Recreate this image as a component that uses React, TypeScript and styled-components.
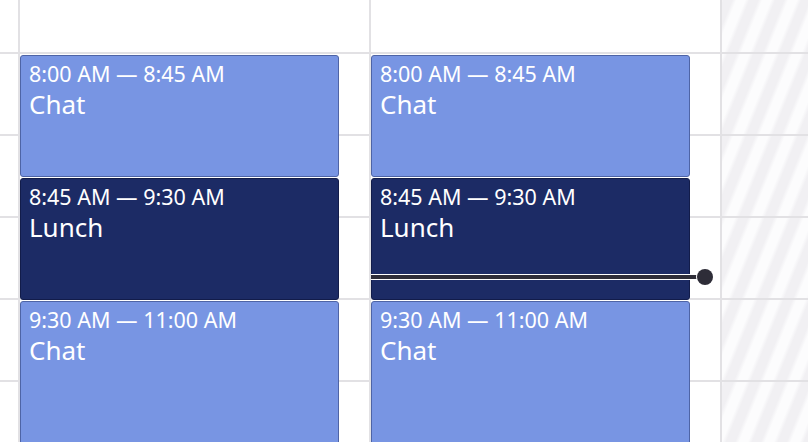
import React from 'react';
import styled, { createGlobalStyle } from 'styled-components';

const SLOT_HEIGHT = 82;
const SLOT_MINUTES = 30;
const DAY_START = 7 * 60 + 30; // first visible row starts at 7:30
const SLOT_COUNT = 7;

type CalendarEvent = {
  id: string;
  start: number;
  end: number;
  title: string;
  variant: 'light' | 'dark';
};

const toMinutes = (h: number, m: number) => h * 60 + m;

const formatTime = (minutes: number) => {
  const h = Math.floor(minutes / 60);
  const m = minutes % 60;
  const suffix = h >= 12 ? 'PM' : 'AM';
  const hour = h % 12 === 0 ? 12 : h % 12;
  return `${hour}:${m.toString().padStart(2, '0')} ${suffix}`;
};

const events: CalendarEvent[] = [
  { id: 'a', start: toMinutes(8, 0), end: toMinutes(8, 45), title: 'Chat', variant: 'light' },
  { id: 'b', start: toMinutes(8, 45), end: toMinutes(9, 30), title: 'Lunch', variant: 'dark' },
  { id: 'c', start: toMinutes(9, 30), end: toMinutes(11, 0), title: 'Chat', variant: 'light' },
];

const NOW = toMinutes(9, 21.6);

const minutesToPx = (minutes: number) => ((minutes - DAY_START) / SLOT_MINUTES) * SLOT_HEIGHT;

const GlobalStyle = createGlobalStyle`
  html, body {
    margin: 0;
    padding: 0;
    background: #ffffff;
    overflow: hidden;
  }
  body {
    font-family: 'Noto Sans', 'Open Sans', sans-serif;
  }
`;

const App: React.FC = () => {
  const slots = Array.from({ length: SLOT_COUNT });

  const renderDay = (showNow: boolean) => (
    <DayColumn>
      {slots.map((_, i) => (
        <Slot key={i} />
      ))}
      {events.map((ev) => (
        <EventCard
          key={ev.id}
          $variant={ev.variant}
          style={{
            top: minutesToPx(ev.start) + 1,
            height: minutesToPx(ev.end) - minutesToPx(ev.start) - 1,
          }}
        >
          <EventTime>
            {formatTime(ev.start)} — {formatTime(ev.end)}
          </EventTime>
          <EventTitle>{ev.title}</EventTitle>
        </EventCard>
      ))}
      {showNow && (
        <NowLine style={{ top: minutesToPx(NOW) - 3 }}>
          <NowDot />
        </NowLine>
      )}
    </DayColumn>
  );

  return (
    <>
      <GlobalStyle />
      <Calendar>
        <Gutter>
          {slots.map((_, i) => (
            <Slot key={i} />
          ))}
        </Gutter>
        {renderDay(false)}
        {renderDay(true)}
        <DisabledColumn>
          {slots.map((_, i) => (
            <Slot key={i} />
          ))}
        </DisabledColumn>
      </Calendar>
    </>
  );
};

const Calendar = styled.div`
  display: flex;
  width: 808px;
  height: 442px;
  overflow: hidden;
  align-items: flex-start;
`;

const ColumnBase = styled.div`
  display: flex;
  flex-direction: column;
  margin-top: -28px;
  position: relative;
  flex-shrink: 0;
`;

const Gutter = styled(ColumnBase)`
  width: 18px;
  border-right: 2px solid #e2e1e4;
`;

const DayColumn = styled(ColumnBase)`
  width: 349px;
  border-right: 2px solid #e2e1e4;
`;

const DisabledColumn = styled(ColumnBase)`
  flex: 1;
  background-color: #f7f6f8;
  background-image: repeating-linear-gradient(
    112deg,
    #fcfcfd 0px,
    #fcfcfd 8px,
    #f1f0f3 12px,
    #f1f0f3 20px,
    #fcfcfd 24px
  );
`;

const Slot = styled.div`
  height: ${SLOT_HEIGHT - 2}px;
  border-bottom: 2px solid #e2e1e4;
  flex-shrink: 0;
`;

const EventCard = styled.div<{ $variant: 'light' | 'dark' }>`
  position: absolute;
  left: 0;
  width: 319px;
  box-sizing: border-box;
  padding: 5px 8px;
  border-radius: 3px;
  border: 1px solid ${({ $variant }) => ($variant === 'dark' ? '#121c4a' : '#4e64a6')};
  background: ${({ $variant }) => ($variant === 'dark' ? '#1c2b65' : '#7895e3')};
  color: #ffffff;
  overflow: hidden;
`;

const EventTime = styled.div`
  font-size: 21.5px;
  line-height: 26px;
  white-space: nowrap;
`;

const EventTitle = styled.div`
  font-size: 26px;
  line-height: 35px;
`;

const NowLine = styled.div`
  position: absolute;
  left: 0;
  width: 334px;
  height: 4px;
  background: #2e2d38;
  border-top: 1px solid #ffffff;
  border-bottom: 1px solid #ffffff;
  z-index: 2;
`;

const NowDot = styled.div`
  position: absolute;
  right: -8px;
  top: 50%;
  width: 16px;
  height: 16px;
  margin-top: -8px;
  border-radius: 50%;
  background: #2e2d38;
  box-shadow: 0 0 0 1px #ffffff;
`;

export default App;
